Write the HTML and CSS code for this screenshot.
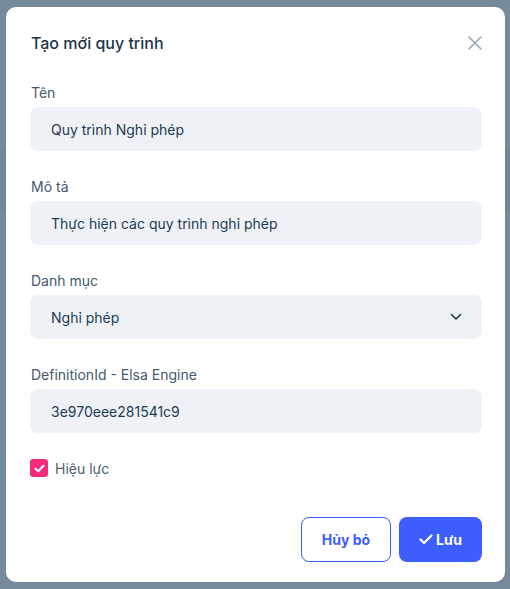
FILE: index.html
```html
<!DOCTYPE html>
<html lang="vi">
<head>
<meta charset="utf-8">
<title>Tạo mới quy trình</title>
<link rel="stylesheet" href="styles.css">
</head>
<body>
<div class="backdrop">
  <div class="modal">
    <div class="modal-header">
      <h2 class="modal-title">Tạo mới quy trình</h2>
      <button class="close-btn" aria-label="Đóng">
        <svg width="14" height="14" viewBox="0 0 14 14"><path d="M1 1 L13 13 M13 1 L1 13" stroke="#9aa7b4" stroke-width="1.6" stroke-linecap="round" fill="none"/></svg>
      </button>
    </div>
    <div class="modal-body">
      <div class="field">
        <label class="label">Tên</label>
        <div class="input">Quy trình Nghỉ phép</div>
      </div>
      <div class="field">
        <label class="label">Mô tả</label>
        <div class="input">Thực hiện các quy trình nghỉ phép</div>
      </div>
      <div class="field">
        <label class="label">Danh mục</label>
        <div class="input select">
          <span>Nghỉ phép</span>
          <svg width="12" height="8" viewBox="0 0 12 8"><path d="M1.5 1.5 L6 6 L10.5 1.5" stroke="#1e3a52" stroke-width="1.6" fill="none" stroke-linecap="round" stroke-linejoin="round"/></svg>
        </div>
      </div>
      <div class="field">
        <label class="label">DefinitionId - Elsa Engine</label>
        <div class="input">3e970eee281541c9</div>
      </div>
      <div class="check-row">
        <span class="checkbox">
          <svg width="11" height="9" viewBox="0 0 11 9"><path d="M1.5 4.6 L4.2 7.2 L9.5 1.8" stroke="#fff" stroke-width="2" fill="none" stroke-linecap="round" stroke-linejoin="round"/></svg>
        </span>
        <span class="check-label">Hiệu lực</span>
      </div>
    </div>
    <div class="modal-footer">
      <button class="btn btn-outline">Hủy bỏ</button>
      <button class="btn btn-primary">
        <svg width="14" height="11" viewBox="0 0 14 11"><path d="M1.5 5.5 L5 9 L12.5 1.5" stroke="#fff" stroke-width="2.2" fill="none" stroke-linecap="round" stroke-linejoin="round"/></svg>
        <span>Lưu</span>
      </button>
    </div>
  </div>
</div>
</body>
</html>
```
FILE: styles.css
```css
* { box-sizing: border-box; }
html, body {
  margin: 0;
  padding: 0;
  width: 510px;
  height: 589px;
  overflow: hidden;
}
body {
  font-family: Inter, "Noto Sans", sans-serif;
  background: #778a9b;
}
.backdrop {
  width: 510px;
  height: 589px;
  padding: 7px 0 0 6px;
  background:
    linear-gradient(to bottom, transparent 0, transparent 150px, rgba(40,60,80,0.06) 150px, rgba(40,60,80,0.06) 210px, transparent 210px);
}
.modal {
  width: 499px;
  height: 575px;
  background: #ffffff;
  border-radius: 10px;
  padding: 0 23px 20px 24px;
  display: flex;
  flex-direction: column;
}
.modal-header {
  display: flex;
  align-items: center;
  justify-content: space-between;
  padding-top: 24px;
  height: 48px;
}
.modal-title {
  margin: 0;
  font-size: 16px;
  line-height: 24px;
  font-weight: 500;
  color: #1b3447;
  padding-left: 1px;
}
.close-btn {
  border: 0;
  background: none;
  padding: 0;
  margin-right: 0;
  width: 14px;
  height: 14px;
  display: flex;
}
.modal-body {
  margin-top: 28px;
  display: flex;
  flex-direction: column;
}
.field {
  display: flex;
  flex-direction: column;
  gap: 4px;
  margin-bottom: 26px;
}
.label {
  font-size: 14px;
  line-height: 20px;
  color: #445a6e;
  padding-left: 1px;
}
.input {
  height: 44px;
  background: #eef2f6;
  border-radius: 8px;
  padding: 0 20px 0 21px;
  display: flex;
  align-items: center;
  font-size: 14px;
  color: #1e3a52;
}
.select {
  justify-content: space-between;
}
.select svg { margin-right: 0; }
.check-row {
  margin-top: -1px;
  display: flex;
  align-items: center;
  gap: 7px;
  height: 20px;
}
.checkbox {
  width: 18px;
  height: 18px;
  border-radius: 3px;
  background: #f42a7e;
  display: flex;
  align-items: center;
  justify-content: center;
}
.check-label {
  font-size: 14px;
  color: #4a5f72;
}
.modal-footer {
  margin-top: auto;
  display: flex;
  justify-content: flex-end;
  gap: 8px;
}
.btn {
  height: 45px;
  border-radius: 8px;
  font-family: Inter, "Noto Sans", sans-serif;
  font-size: 14px;
  font-weight: 700;
  display: flex;
  align-items: center;
  justify-content: center;
  gap: 3px;
  box-shadow: 0 0 8px rgba(60, 90, 250, 0.04);
}
.btn-outline {
  width: 90px;
  background: #fff;
  border: 1px solid #3d5efc;
  color: #3d5efc;
}
.btn-primary {
  width: 83px;
  background: #3d5efc;
  border: 0;
  color: #fff;
}
```
